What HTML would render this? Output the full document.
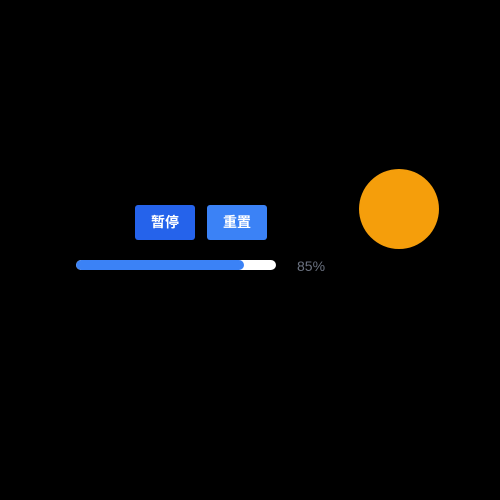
<!DOCTYPE html>
<html><head><style>
html,body{margin:0;width:500px;height:500px;background:#000;overflow:hidden;font-family:"Liberation Sans","Noto Sans CJK SC",sans-serif}
.b{position:absolute;top:205px;width:60px;height:35px;border-radius:3px;color:#fff;font-size:14px;font-weight:bold;line-height:35px;text-align:center}
</style></head><body>
<div class="b" style="left:135px;background:#2563eb">暂停</div>
<div class="b" style="left:207px;background:#3b82f6">重置</div>
<div style="position:absolute;left:76px;top:260px;width:200px;height:10px;border-radius:5px;background:#fff;overflow:hidden"><div style="width:168px;height:10px;border-radius:5px;background:#3b82f6"></div></div>
<div style="position:absolute;left:297px;top:257px;font-size:14px;color:#6b7280;line-height:18px">85%</div>
<div style="position:absolute;left:359px;top:169px;width:80px;height:80px;border-radius:50%;background:#f59e0b"></div>
</body></html>
